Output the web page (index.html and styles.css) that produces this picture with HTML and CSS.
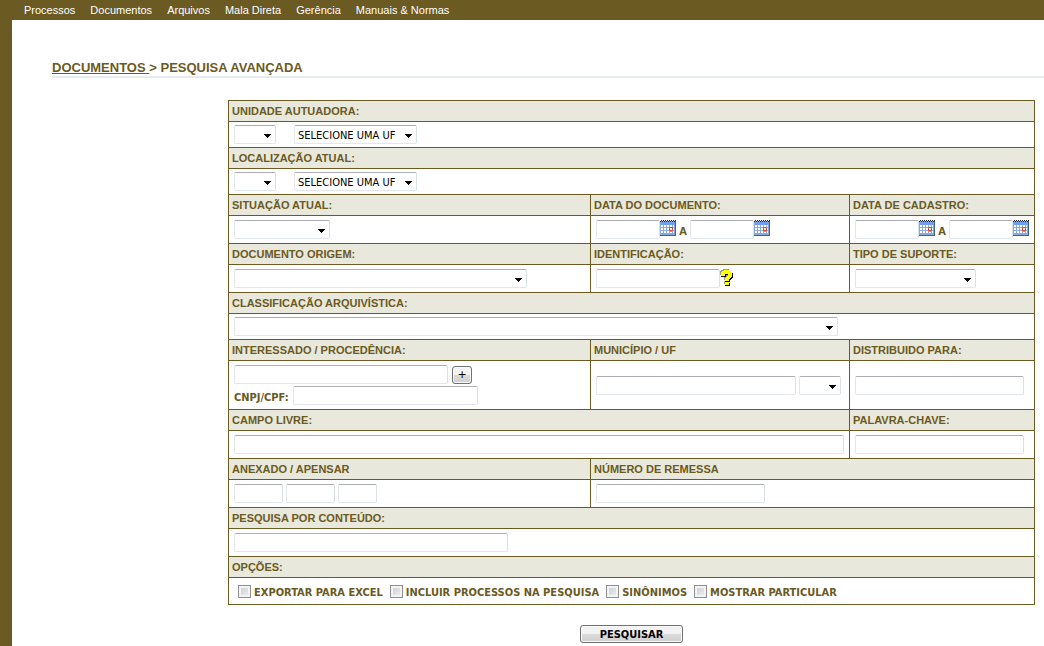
FILE: index.html
```html
<!DOCTYPE html>
<html lang="pt-BR">
<head>
<meta charset="utf-8">
<title>Pesquisa Avançada</title>
<link rel="stylesheet" href="styles.css">
</head>
<body>
<svg class="sprites" aria-hidden="true">
  <symbol id="calendar" viewBox="0 0 16 16">
    <rect x="0" y="1" width="16" height="15" fill="#3a629c"/>
    <rect x="0" y="1" width="15" height="14" fill="#8aa9d8"/>
    <rect x="1" y="2" width="14" height="3" fill="#6f9ff0"/>
    <path d="M0 .5h16" stroke="#fff"/>
    <path d="M1 .5h15M0 1.5h16" stroke="#222" stroke-dasharray="1 1"/>
    <path d="M1 5h2v2H1zM4 5h2v2H4zM7 5h2v2H7zM10 5h2v2h-2zM13 5h1v2h-1zM1 8h2v2H1zM4 8h2v2H4zM7 8h2v2H7zM13 8h1v2h-1zM1 11h2v2H1zM4 11h2v2H4zM7 11h2v2H7zM10 12h2v1h-2zM13 11h1v2h-1z" fill="#fff"/>
    <path d="M9.500 7.500h3v3h-3z" fill="#fff" stroke="#e8441c"/>
  </symbol>
  <symbol id="question" viewBox="0 0 13 17">
    <path d="M3 0h6v1h1v1h1v5h-1v1H9v1H8v2H4V8h1V7h1V6h1V4H4v2H0V2h1V1h2zM4 12h4v3H4z"/>
  </symbol>
</svg>
<nav class="menu">
  <a href="#">Processos</a>
  <a href="#">Documentos</a>
  <a href="#">Arquivos</a>
  <a href="#">Mala Direta</a>
  <a href="#">Gerência</a>
  <a href="#">Manuais &amp; Normas</a>
</nav>
<main class="page">
  <h1 class="title"><a href="#">DOCUMENTOS&nbsp;</a>&gt; PESQUISA AVANÇADA</h1>
  <form class="search">
    <div class="grid">
      <section class="cell full">
        <label class="head" for="unidade">UNIDADE AUTUADORA:</label>
        <div class="body short">
          <select id="unidade" class="uf"><option></option></select>
          <select class="pick" aria-label="Unidade"><option>SELECIONE UMA UF</option></select>
        </div>
      </section>
      <section class="cell full">
        <label class="head" for="local">LOCALIZAÇÃO ATUAL:</label>
        <div class="body short">
          <select id="local" class="uf"><option></option></select>
          <select class="pick" aria-label="Local"><option>SELECIONE UMA UF</option></select>
        </div>
      </section>

      <section class="cell">
        <label class="head" for="situacao">SITUAÇÃO ATUAL:</label>
        <div class="body"><select id="situacao" class="w96"><option></option></select></div>
      </section>
      <section class="cell">
        <label class="head" for="doc-de">DATA DO DOCUMENTO:</label>
        <div class="body dates">
          <input id="doc-de" class="date" type="text">
          <button type="button" class="icon" aria-label="Calendário"><svg><use href="#calendar"/></svg></button>
          <label for="doc-ate">A</label>
          <input id="doc-ate" class="date" type="text">
          <button type="button" class="icon" aria-label="Calendário"><svg><use href="#calendar"/></svg></button>
        </div>
      </section>
      <section class="cell">
        <label class="head" for="cad-de">DATA DE CADASTRO:</label>
        <div class="body dates">
          <input id="cad-de" class="date" type="text">
          <button type="button" class="icon" aria-label="Calendário"><svg><use href="#calendar"/></svg></button>
          <label for="cad-ate">A</label>
          <input id="cad-ate" class="date" type="text">
          <button type="button" class="icon" aria-label="Calendário"><svg><use href="#calendar"/></svg></button>
        </div>
      </section>

      <section class="cell">
        <label class="head" for="origem">DOCUMENTO ORIGEM:</label>
        <div class="body"><select id="origem" class="w293"><option></option></select></div>
      </section>
      <section class="cell">
        <label class="head" for="ident">IDENTIFICAÇÃO:</label>
        <div class="body dates">
          <input id="ident" class="w124" type="text">
          <button type="button" class="icon help" aria-label="Ajuda">
            <svg viewBox="0 0 13 17" shape-rendering="crispEdges">
              <use href="#question" width="13" height="17" fill="#999"/>
              <use href="#question" x="2" y="2" width="13" height="17" fill="#000"/>
              <use href="#question" x="1" y="2" width="13" height="17" fill="#000"/>
              <use href="#question" x="1" y="1" width="13" height="17" fill="#ff0"/>
            </svg>
          </button>
        </div>
      </section>
      <section class="cell">
        <label class="head" for="suporte">TIPO DE SUPORTE:</label>
        <div class="body"><select id="suporte" class="w121"><option></option></select></div>
      </section>

      <section class="cell full">
        <label class="head" for="classe">CLASSIFICAÇÃO ARQUIVÍSTICA:</label>
        <div class="body short"><select id="classe" class="w604"><option></option></select></div>
      </section>

      <section class="cell">
        <label class="head" for="interessado">INTERESSADO / PROCEDÊNCIA:</label>
        <div class="body stack">
          <div class="line">
            <input id="interessado" class="w214" type="text">
            <button type="button" class="plus">+</button>
          </div>
          <div class="line">
            <label for="cnpj">CNPJ/CPF:</label>
            <input id="cnpj" class="w185" type="text">
          </div>
        </div>
      </section>
      <section class="cell">
        <label class="head" for="municipio">MUNICÍPIO / UF</label>
        <div class="body">
          <input id="municipio" class="w200" type="text">
          <select class="uf" aria-label="UF"><option></option></select>
        </div>
      </section>
      <section class="cell">
        <label class="head" for="distribuido">DISTRIBUIDO PARA:</label>
        <div class="body"><input id="distribuido" class="w169" type="text"></div>
      </section>

      <section class="cell two">
        <label class="head" for="livre">CAMPO LIVRE:</label>
        <div class="body"><input id="livre" class="wide" type="text"></div>
      </section>
      <section class="cell">
        <label class="head" for="chave">PALAVRA-CHAVE:</label>
        <div class="body"><input id="chave" class="w169" type="text"></div>
      </section>

      <section class="cell">
        <label class="head" for="anexado">ANEXADO / APENSAR</label>
        <div class="body">
          <input id="anexado" class="w49" type="text">
          <input class="w49" type="text" aria-label="Número">
          <input class="w39" type="text" aria-label="Ano">
        </div>
      </section>
      <section class="cell rest">
        <label class="head" for="remessa">NÚMERO DE REMESSA</label>
        <div class="body"><input id="remessa" class="w169" type="text"></div>
      </section>

      <section class="cell full">
        <label class="head" for="conteudo">PESQUISA POR CONTEÚDO:</label>
        <div class="body"><input id="conteudo" class="w274" type="text"></div>
      </section>

      <section class="cell full">
        <div class="head">OPÇÕES:</div>
        <div class="body options">
          <label><input type="checkbox">EXPORTAR PARA EXCEL</label>
          <label><input type="checkbox">INCLUIR PROCESSOS NA PESQUISA</label>
          <label><input type="checkbox">SINÔNIMOS</label>
          <label><input type="checkbox">MOSTRAR PARTICULAR</label>
        </div>
      </section>
    </div>
    <button type="submit" class="submit">PESQUISAR</button>
  </form>
</main>
</body>
</html>
```
FILE: styles.css
```css
* { box-sizing: border-box; }

body {
  margin: 0;
  min-height: 100vh;
  display: flex;
  flex-direction: column;
  background: #fff;
  color: #6b5a21;
  font-family: "DejaVu Sans Condensed", Tahoma, "DejaVu Sans", sans-serif;
  font-size: 11px;
}

.sprites { display: none; }

.menu {
  display: flex;
  gap: 15px;
  height: 20px;
  padding-left: 24px;
  background: #6b5a21;
  font: 11px/20px "Liberation Sans", Arial, sans-serif;
}
.menu a { color: #fff; text-decoration: none; }

.page {
  flex: 1;
  border-left: 12px solid #6b5a21;
  padding-top: 40px;
}

.title {
  margin: 0 0 22px 40px;
  border-bottom: 2px solid #e5ecf0;
  font: bold 13px/16px "Liberation Sans", Arial, sans-serif;
}
.title a { color: inherit; }

.search { margin: 0 9px 0 216px; }

.grid {
  display: grid;
  grid-template-columns: 362fr 259fr 185fr;
  border-top: 1px solid #6b5a21;
  border-left: 1px solid #6b5a21;
}

.cell {
  display: flex;
  flex-direction: column;
  border-right: 1px solid #6b5a21;
  border-bottom: 1px solid #6b5a21;
}
.full { grid-column: span 3; }
.two, .rest { grid-column: span 2; }

.head {
  padding-left: 3px;
  border-bottom: 1px solid #6b5a21;
  background: #e8e8dc;
  font: bold 11px/20px "Liberation Sans", Arial, sans-serif;
}

.body {
  flex: 1;
  display: flex;
  align-items: center;
  gap: 3px;
  padding: 4px 5px;
  font-weight: bold;
}
.short { padding: 3px 5px; }
.stack { flex-direction: column; align-items: flex-start; gap: 2px; }
.line { display: flex; align-items: center; gap: 4px; height: 19px; }
.line label { padding-top: 4px; }
.dates { gap: 0; }
.dates label { width: 14px; padding-top: 3px; text-align: center; }

input[type="text"], select {
  height: 19px;
  margin: 0;
  padding: 1px 3px 0;
  border: 1px solid #e2e6ee;
  border-top-color: #abadb3;
  border-right-color: #dbdfe6;
  border-radius: 2px;
  background-color: #fff;
  color: #000;
  font: 11px "DejaVu Sans Condensed", Tahoma, sans-serif;
}

select {
  appearance: none;
  background-image: url("data:image/svg+xml,%3Csvg xmlns='http://www.w3.org/2000/svg' width='7' height='4' shape-rendering='crispEdges'%3E%3Cpath d='M0 0h7v1H6v1H5v1H4v1H3V3H2V2H1V1H0z'/%3E%3C/svg%3E");
  background-repeat: no-repeat;
  background-position: right 4px top 8px;
}

.uf { width: 42px; }
.uf + .pick { margin-left: 15px; }
.pick { width: 123px; }
.date { width: 64px; }
.wide { width: 100%; }
.w39 { width: 39px; }
.w49 { width: 49px; }
.w96 { width: 96px; }
.w121 { width: 121px; }
.w124 { width: 124px; }
.w169 { width: 169px; }
.w185 { width: 185px; }
.w200 { width: 200px; }
.w214 { width: 214px; }
.w274 { width: 274px; }
.w293 { width: 293px; }
.w604 { width: 604px; }

.icon {
  width: 16px;
  height: 16px;
  margin-bottom: 3px;
  padding: 0;
  border: 0;
  background: none;
}
.icon svg { display: block; width: 16px; height: 16px; }
.help { width: 13px; height: 17px; margin-bottom: 2px; }
.help svg { width: 13px; height: 17px; }

.plus, .submit {
  padding: 0;
  border: 1px solid #707070;
  border-radius: 3px;
  background: linear-gradient(#f2f2f2 0 50%, #dcdcdc 50%, #cfcfcf);
  box-shadow: inset 0 0 0 1px #fafafa;
  color: #000;
  font: 11px/16px "DejaVu Sans", sans-serif;
}
.plus { width: 20px; height: 18px; }

.options { gap: 7px; padding: 7px 9px 4px; line-height: 15px; }
.options label { display: flex; align-items: center; gap: 3px; }
.options input {
  appearance: none;
  width: 13px;
  height: 13px;
  margin: 0 0 2px;
  border: 1px solid #8e8f8f;
  background: linear-gradient(135deg, #c4c9d0, #f2f3f5);
  box-shadow: inset 0 0 0 2px #f4f4f4;
}

.submit {
  display: block;
  width: 103px;
  height: 18px;
  margin: 20px auto 0;
  padding-top: 1px;
  font-family: "DejaVu Sans Condensed", Tahoma, sans-serif;
  font-weight: bold;
}
```
